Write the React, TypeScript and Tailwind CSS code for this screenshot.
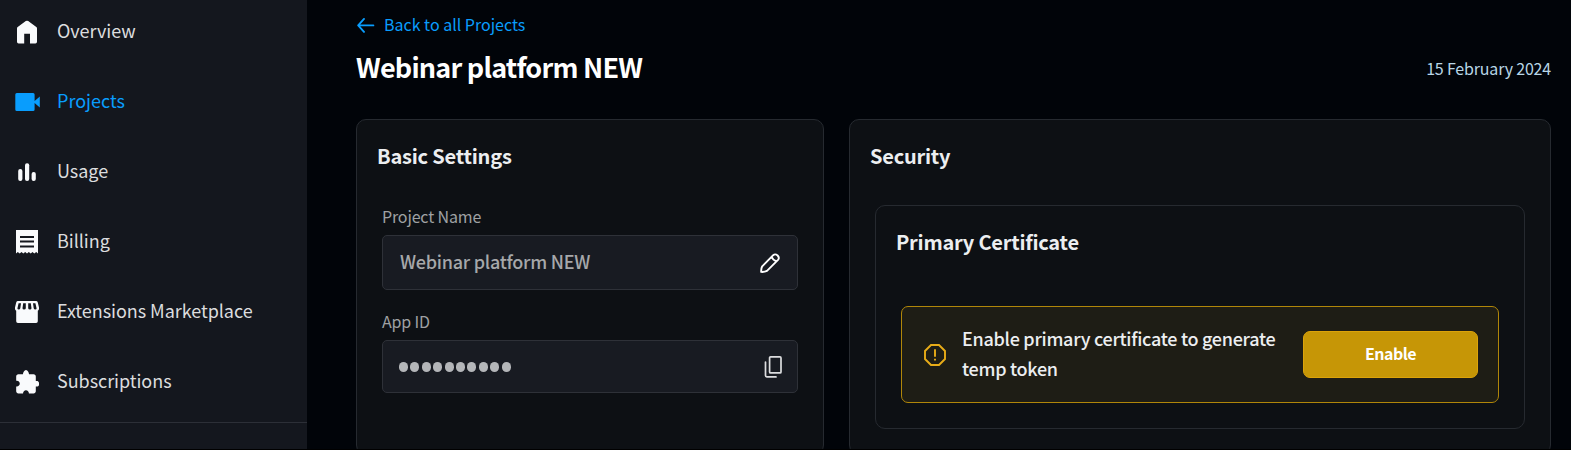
import React from "react";

const stroke = { fill: "none", stroke: "currentColor" } as const;

const HomeIcon = () => (
  <svg width="24" height="26" viewBox="0 0 24 26" fill="currentColor">
    <path d="M2 9.4 Q2 8.5 2.7 8 L10.8 2.1 Q12 1.3 13.2 2.1 L21.3 8 Q22 8.5 22 9.4 V22.8 Q22 24.4 20.4 24.4 H15 V14.8 H9.2 V24.4 H3.6 Q2 24.4 2 22.8Z" />
  </svg>
);
const VideoIcon = () => (
  <svg width="24" height="26" viewBox="0 0 24 26" fill="currentColor" className="overflow-visible">
    <path d="M1.8 4H18.1Q19.6 4 19.6 5.5V11.9L24.8 7.6V18.4L19.6 14.1V20.5Q19.6 22 18.1 22H1.8Q.3 22 .3 20.5V5.5Q.3 4 1.8 4Z" />
  </svg>
);
const BarsIcon = () => (
  <svg width="24" height="26" viewBox="0 0 24 26" fill="currentColor">
    <rect x="3.2" y="10" width="4.2" height="12" rx="2" />
    <rect x="10" y="4.2" width="4.2" height="17.8" rx="2" />
    <rect x="16.6" y="13" width="4.2" height="9" rx="2" />
  </svg>
);
const ReceiptIcon = () => (
  <svg width="24" height="26" viewBox="0 0 24 26" fill="currentColor">
    <path fillRule="evenodd" d="M1 1H23V24.5L21.2 23 19.3 24.5 17.5 23 15.7 24.5 13.8 23 12 24.5 10.2 23 8.3 24.5 6.5 23 4.7 24.5 2.8 23 1 24.5ZM5 7V9H19V7ZM5 11.5V13.5H19V11.5ZM5 16.4V18.4H19V16.4Z" />
  </svg>
);
const StoreIcon = () => (
  <svg width="24" height="26" viewBox="0 0 24 26" fill="currentColor">
    <path fillRule="evenodd" d="M3 2H21Q22.4 2 22.8 3.4L24 8.6Q24.3 10.7 22.8 11.8V22.3Q22.8 24 21.1 24H2.9Q1.2 24 1.2 22.3V11.8Q-.3 10.7 0 8.6L1.2 3.4Q1.6 2 3 2ZM3.6 4.2 2.4 9.5Q2.6 10.6 3.6 10.6 5 10.6 5.3 9.2L6 4.2ZM8.2 4.2 7.5 9.2Q7.6 10.6 9 10.6 10.7 10.6 10.8 9.2V4.2ZM13.2 4.2V9.2Q13.3 10.6 15 10.6 16.4 10.6 16.5 9.2L15.8 4.2ZM18 4.2 18.7 9.2Q19 10.6 20.4 10.6 21.4 10.6 21.6 9.5L20.4 4.2Z" />
  </svg>
);
const PuzzleIcon = () => (
  <svg width="24" height="26" viewBox="0 0 24 26" fill="currentColor">
    <path transform="translate(-1 -.1) scale(1.09)" d="M21 11.2H20V7c0-1.1-.9-2-2-2h-4.2C13.6 3.1 12.6 1 11 1S8.4 3.1 8.2 5H4c-1.1 0-1.99.9-1.99 2v3.8H2.6c1.49 0 2.7 1.21 2.7 2.7s-1.21 2.7-2.7 2.7H2V20.6c0 1.1.9 2 2 2h4.3c0-1.8 1.21-3 2.7-3 1.49 0 2.7 1.21 2.7 3H18c1.1 0 2-.9 2-2v-4.4h1c1.2 0 2.1-1.12 2.1-2.5S22.2 11.2 21 11.2z" />
  </svg>
);

const items = [
  { label: "Overview", icon: <HomeIcon /> },
  { label: "Projects", icon: <VideoIcon />, active: true },
  { label: "Usage", icon: <BarsIcon /> },
  { label: "Billing", icon: <ReceiptIcon /> },
  { label: "Extensions Marketplace", icon: <StoreIcon /> },
  { label: "Subscriptions", icon: <PuzzleIcon /> },
];

export default function App() {
  return (
    <div className="flex h-[450px] w-[1571px] overflow-hidden border-b border-black bg-[#010409] font-['Noto_Sans_CJK_SC','Noto_Sans',sans-serif] text-[#eceef0]">
      <aside className="w-[307px] shrink-0 bg-[#14171e]">
        <nav className="flex h-[423px] flex-col border-b border-[#2c2f37] pt-px">
          {items.map((it) => (
            <a key={it.label} className={it.active ? "flex h-[70px] shrink-0 items-center gap-[18px] pl-[15px] text-[#099dfd]" : "flex h-[70px] shrink-0 items-center gap-[18px] pl-[15px] text-[#f9fafc] first:h-[66px] first:pb-1"}>
              {it.icon}
              <span className={it.active ? "-mt-[4px] text-[18px] leading-7" : "-mt-[4px] text-[18px] leading-7 tracking-[-0.05px] text-[#dcdddf]"}>{it.label}</span>
            </a>
          ))}
        </nav>
      </aside>
      <main className="flex flex-1 flex-col pl-[49px] pr-5">
        <a className="mt-[13px] flex h-6 shrink-0 items-center gap-[9px] pl-px text-[16px] text-[#099dfd]">
          <svg width="18" height="16" viewBox="0 0 18 16" {...stroke} strokeWidth="1.9" strokeLinecap="round" strokeLinejoin="round">
            <path d="M16.4 8.4H1.4M7 1.9 1.2 8.4 7 14.9" />
          </svg>
          <span className="-mt-[2px] leading-6">Back to all Projects</span>
        </a>
        <div className="mt-[11px] flex h-10 shrink-0 items-center justify-between">
          <h1 className="-mt-[2px] text-[27px] font-bold leading-10 tracking-[-0.79px] text-white">Webinar platform NEW</h1>
          <time className="text-[16px] tracking-[-0.18px] text-[#b8d6e6]">15 February 2024</time>
        </div>
        <div className="mt-[31px] flex shrink-0 gap-[25px]">
          <section className="h-[336px] w-[468px] shrink-0 rounded-[10px] border border-[#262a30] bg-[#0d1014] px-[25px]">
            <h2 className="-ml-[5px] mt-[21px] text-[20px] font-bold leading-[30px] tracking-[-0.2px]">Basic Settings</h2>
            <label className="mt-[33px] block text-[16px] leading-6 tracking-[-0.15px] text-[#9fa1a3]">Project Name</label>
            <div className="mt-[7px] flex h-[55px] items-center justify-between rounded-[5px] border border-[#2e3138] bg-[#181b22] pl-[17px] pr-[17px]">
              <span className="-mt-[2px] text-[18px] font-medium tracking-[-0.26px] text-[#a6a8aa]">Webinar platform NEW</span>
              <svg width="20" height="20" viewBox="0 0 20 20" {...stroke} className="text-white" strokeWidth="1.9" strokeLinejoin="round">
                <path d="M1.2 18.9Q1 15.6 2.2 13.3L13.2 2.2Q15.2.4 17.6 2.5 19.8 4.9 18 6.9L7 17.9Q4.6 19.1 1.2 18.9ZM11.6 3.8Q13 7.2 16.4 8.5" />
              </svg>
            </div>
            <label className="mt-[19px] block text-[16px] leading-6 tracking-[-0.15px] text-[#9fa1a3]">App ID</label>
            <div className="mt-[7px] flex h-[53px] items-center justify-between rounded-[5px] border border-[#2e3138] bg-[#181b22] pl-[16px] pr-[15px]">
              <div className="flex gap-[2.4px] text-[#b4b6b9]">
                {Array.from({ length: 10 }, (_, i) => (
                  <span key={i} className="h-[10px] w-[9px] rounded-full bg-current" />
                ))}
              </div>
              <svg width="18" height="22" viewBox="0 0 18 22" {...stroke} className="text-[#dcdddf]" strokeWidth="1.7" strokeLinecap="round">
                <rect x="5.6" y=".9" width="11.4" height="16" rx="1" />
                <path d="M1.5 6V19.6Q1.5 20.9 2.8 20.9H12" />
              </svg>
            </div>
          </section>
          <section className="h-[336px] flex-1 rounded-[10px] border border-[#262a30] bg-[#0d1014] px-[25px]">
            <h2 className="-ml-[5px] mt-[21px] text-[20px] font-bold leading-[30px] tracking-[-0.22px]">Security</h2>
            <div className="mt-[34px] h-[224px] rounded-[10px] border border-[#262a30] px-[25px]">
              <h3 className="-ml-[5px] mt-[21px] text-[20px] font-bold leading-[30px] tracking-[-0.23px]">Primary Certificate</h3>
              <div className="mt-[49px] flex h-[97px] items-center rounded-[7px] border border-[#b08609] bg-[#1e1d15] pl-[22px] pr-[20px]">
                <svg width="22" height="22" viewBox="0 0 22 22" {...stroke} className="shrink-0 text-[#e8ac18]" strokeWidth="1.9">
                  <path d="M7 1H15L21 7V15L15 21H7L1 15V7ZM11 5.3V12.7M11 14.8V16.6" />
                </svg>
                <p className="-mt-[3px] ml-4 flex-1 text-[18px] font-medium leading-[30px] tracking-[-0.28px]">Enable primary certificate to generate<br />temp token</p>
                <button className="h-[47px] w-[175px] shrink-0 rounded-[7px] border border-[#dca30a] bg-[#c69606] pb-[3px] text-[16px] font-bold tracking-[-0.55px] text-white">Enable</button>
              </div>
            </div>
          </section>
        </div>
      </main>
    </div>
  );
}
